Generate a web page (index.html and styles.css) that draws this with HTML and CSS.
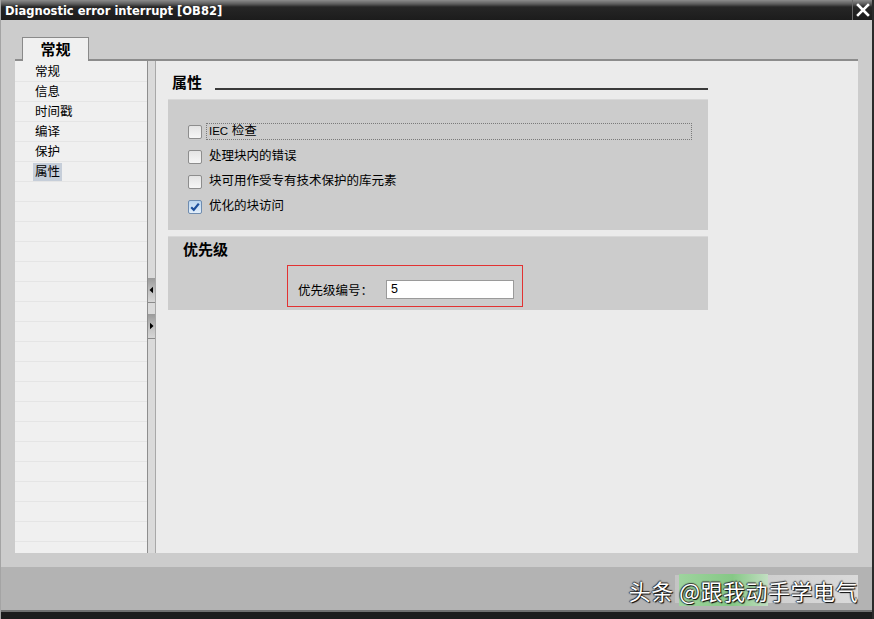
FILE: index.html
```html
<!DOCTYPE html>
<html lang="zh-CN">
<head>
<meta charset="utf-8">
<title>Diagnostic error interrupt [OB82]</title>
<link rel="stylesheet" href="styles.css">
</head>
<body>
<div class="window">
  <div class="titlebar">
    <span class="title">Diagnostic error interrupt [OB82]</span>
    <span class="close">
      <svg width="14" height="14" viewBox="0 0 14 14"><path d="M2 2 L12 12 M12 2 L2 12" stroke="#fff" stroke-width="2.6" stroke-linecap="square"/></svg>
    </span>
  </div>
  <div class="body">
    <div class="tabs"><div class="tab">常规</div></div>
    <div class="panel">
      <nav class="nav">
        <div class="nav-item"><span>常规</span></div>
        <div class="nav-item"><span>信息</span></div>
        <div class="nav-item"><span>时间戳</span></div>
        <div class="nav-item"><span>编译</span></div>
        <div class="nav-item"><span>保护</span></div>
        <div class="nav-item selected"><span>属性</span></div>
      </nav>
      <div class="splitter">
        <div class="split-btn"><svg width="7" height="8" viewBox="0 0 7 8"><path d="M1.5 4 L5 0.8 L5 7.2 Z" fill="#000"/></svg></div>
        <div class="split-btn"><svg width="7" height="8" viewBox="0 0 7 8"><path d="M5.5 4 L2 0.8 L2 7.2 Z" fill="#000"/></svg></div>
      </div>
      <div class="content">
        <div class="heading"><span class="heading-text">属性</span><div class="rule"></div></div>
        <div class="group">
          <div class="check-row"><span class="cb"></span><span class="label focus"><span class="latin">IEC</span> 检查</span></div>
          <div class="check-row"><span class="cb"></span><span class="label">处理块内的错误</span></div>
          <div class="check-row"><span class="cb"></span><span class="label">块可用作受专有技术保护的库元素</span></div>
          <div class="check-row"><span class="cb checked"><svg width="12" height="12" viewBox="0 0 12 12"><path d="M2.2 6.2 L4.8 8.8 L9.8 2.6" fill="none" stroke="#1d4f9c" stroke-width="2.2"/></svg></span><span class="label">优化的块访问</span></div>
        </div>
        <div class="group priority">
          <div class="group-title">优先级</div>
          <div class="redbox">
            <span class="field-label">优先级编号：</span>
            <div class="input">5</div>
          </div>
        </div>
      </div>
    </div>
  </div>
  <div class="footer"><span class="wm">头条 <span class="wm-hl">@跟我动</span>手学电气</span></div>
  <div class="bottom-edge"></div>
</div>
</body>
</html>
```
FILE: styles.css
```css
html, body {
  margin: 0;
  padding: 0;
}
body {
  width: 874px;
  height: 619px;
  overflow: hidden;
  font-family: "Liberation Sans", "Noto Sans CJK SC", sans-serif;
  font-size: 12.5px;
  color: #000;
}
.window {
  box-sizing: border-box;
  width: 874px;
  height: 619px;
  display: flex;
  flex-direction: column;
  background: #cccccc;
  border-left: 1px solid #a4a4a4;
  border-right: 2px solid #2a2a2a;
}
.titlebar {
  height: 20px;
  flex: none;
  display: flex;
  align-items: center;
  justify-content: space-between;
  background: linear-gradient(#8c8c8c 0, #5c5c5c 4px, #262626 7px, #1c1c1c 20px);
  color: #fff;
}
.title {
  font-family: "DejaVu Sans", sans-serif;
  font-weight: bold;
  font-size: 11.5px;
  padding-left: 4px;
  padding-top: 1px;
}
.close {
  display: flex;
  align-items: center;
  justify-content: center;
  width: 19px;
  height: 20px;
  border-left: 1px solid #6a6a6a;
}
.body {
  flex: 1;
  display: flex;
  flex-direction: column;
  padding: 0 14px 14px 14px;
}
.tabs {
  padding-top: 17px;
  padding-left: 7px;
  display: flex;
}
.tab {
  position: relative;
  z-index: 1;
  box-sizing: border-box;
  height: 24px;
  width: 67px;
  margin-bottom: -2px;
  border: 1px solid #8a8a8a;
  border-bottom: none;
  background: #f0f0f0;
  font-weight: bold;
  font-size: 15px;
  display: flex;
  justify-content: center;
  align-items: center;
  padding-bottom: 2px;
}
.panel {
  flex: 1;
  display: flex;
  border-top: 2px solid #8c8c8c;
  min-height: 0;
}
.nav {
  width: 132px;
  flex: none;
  padding-top: 1px;
  background: repeating-linear-gradient(to bottom, #f0f0f0 0, #f0f0f0 19px, #e5e5e5 19px, #e5e5e5 20px);
  background-position: 0 1px;
}
.nav-item {
  height: 20px;
  display: flex;
  align-items: center;
  padding-left: 18px;
}
.nav-item span {
  padding: 0 2px;
  line-height: 18px;
}
.nav-item.selected span {
  background: #c6ced9;
}
.splitter {
  width: 7px;
  flex: none;
  background: #dadada;
  border-left: 1px solid #8e8e8e;
  border-right: 1px solid #a8a8a8;
  display: flex;
  flex-direction: column;
  gap: 11px;
  padding-top: 217px;
}
.split-btn {
  height: 24px;
  display: flex;
  align-items: center;
  justify-content: center;
  background: linear-gradient(#9a9a9a, #c4c4c4 60%, #d6d6d6);
  border-bottom: 1px solid #8a8a8a;
}
.content {
  flex: 1;
  background: #ebebeb;
  padding: 12px 150px 0 12px;
}
.heading {
  display: flex;
  align-items: center;
  height: 20px;
  margin-bottom: 6px;
}
.heading-text {
  font-weight: bold;
  font-size: 15px;
  padding-left: 4px;
  line-height: 20px;
}
.rule {
  flex: 1;
  height: 2px;
  background: #3a3a3a;
  margin-top: 12px;
  margin-left: 13px;
}
.group {
  background: #cccccc;
  border-top: 1px solid #d8d8d8;
  padding: 19px 16px 11px 20px;
}
.check-row {
  height: 25px;
  display: flex;
  align-items: center;
}
.cb {
  box-sizing: border-box;
  width: 14px;
  height: 14px;
  flex: none;
  border: 1px solid #8d8d8d;
  border-radius: 2px;
  background: linear-gradient(#e4e4e4, #f6f6f6);
  margin-right: 4px;
  display: flex;
  align-items: center;
  justify-content: center;
}
.cb.checked {
  background: linear-gradient(#b9d4ef, #e2eefa);
  border-color: #6e8cb0;
}
.label {
  border: 1px solid transparent;
  padding-left: 2px;
  line-height: 15px;
}
.latin {
  font-size: 11.5px;
}
.label.focus {
  flex: 1;
  border: 1px dotted #7a7a7a;
}
.group.priority {
  margin-top: 6px;
  padding: 3px 0 3px 15px;
}
.group-title {
  font-weight: bold;
  font-size: 15px;
  line-height: 20px;
}
.redbox {
  margin-top: 5px;
  margin-left: 104px;
  width: 236px;
  box-sizing: border-box;
  border: 1px solid #e23232;
  padding: 14px 0 7px 10px;
  display: flex;
  align-items: center;
}
.field-label {
  width: 88px;
  flex: none;
}
.input {
  box-sizing: border-box;
  width: 128px;
  height: 19px;
  border: 1px solid #9a9a9a;
  background: #fff;
  padding-left: 4px;
  line-height: 17px;
}
.footer {
  height: 43px;
  flex: none;
  background: #b3b3b3;
  display: flex;
  align-items: center;
  justify-content: flex-end;
  padding-right: 14px;
}
.wm {
  font-family: "Noto Sans CJK SC", sans-serif;
  font-size: 22px;
  color: #fff;
  letter-spacing: 0.5px;
  text-shadow: 1px 1px 1px #000, -1px 0 1px #333, 0 -1px 1px #333;
  line-height: 26px;
  padding-top: 2px;
  background: linear-gradient(to right, transparent 0, transparent 46px, #c4c4c4 46px, #dadada 100%);
}
.wm-hl {
  background: linear-gradient(to right, #9ed49e, #86c886 60%, #c2dfc2);
}
.bottom-edge {
  height: 9px;
  flex: none;
  background: #1c1c1c;
  border-top: 2px solid #707070;
  box-sizing: border-box;
}
```
